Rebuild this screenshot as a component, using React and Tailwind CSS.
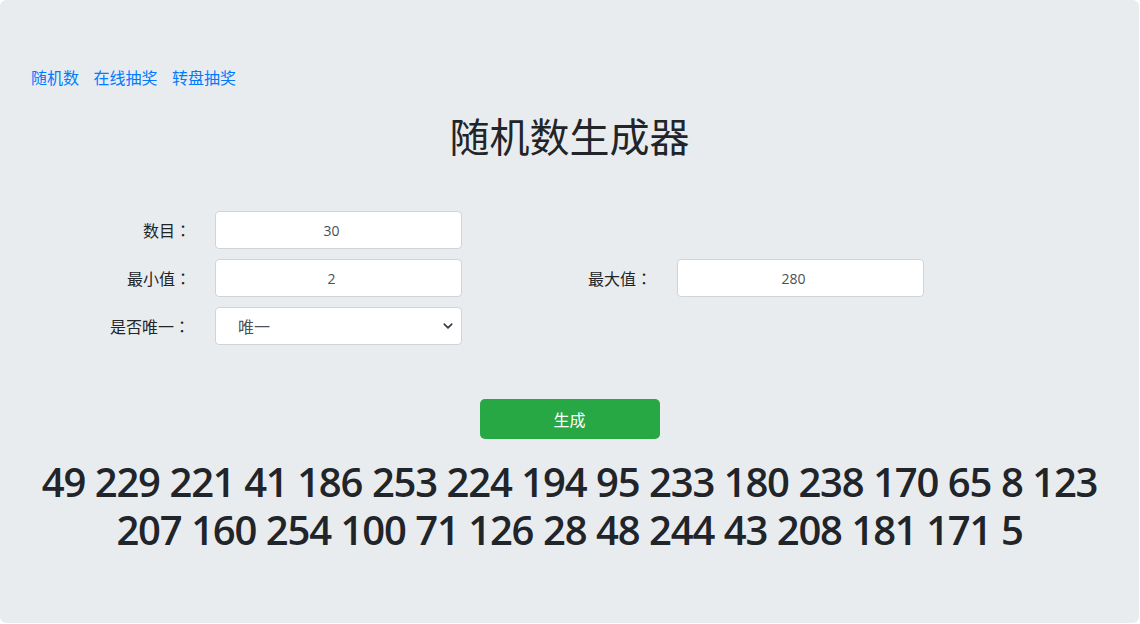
export default function App() {
  const cjk = { fontFamily: '"Segoe UI", "Noto Sans CJK SC", "Noto Sans", sans-serif' };
  const colon = <span style={{ fontFamily: '"Noto Sans CJK TC", sans-serif' }}>：</span>;
  const inputCls = "h-[38px] w-full rounded border border-[#ced4da] bg-white pl-[12px] pr-[26px] text-center text-[14px] text-[#495057] outline-none";
  const inFont = { fontFamily: '"Open Sans", sans-serif' };
  return (
    <div className="w-[1140px] h-[624px] bg-white" style={cjk}>
      <div className="w-[1139px] h-[623px] rounded-md bg-[#e9ecef] px-[30px] pt-[65px] text-[#212529]">
        <div className="flex gap-[14.5px] pl-[1px] text-[16px] leading-[24px] text-[#007bff]">
          <a>随机数</a>
          <a>在线抽奖</a>
          <a>转盘抽奖</a>
        </div>
        <h1 className="mt-[22px] text-center text-[40px] leading-[48px] font-normal">随机数生成器</h1>
        <div className="mt-[52px] -mx-[15px] flex flex-col gap-[10px] text-[16px]">
          <div className="grid grid-cols-[185px_277px_185px_277px] items-center">
            <label className="pr-[9px] text-right">数目{colon}</label>
            <div className="px-[15px]">
              <input readOnly value="30" className={inputCls} style={inFont} />
            </div>
          </div>
          <div className="grid grid-cols-[185px_277px_185px_277px] items-center">
            <label className="pr-[9px] text-right">最小值{colon}</label>
            <div className="px-[15px]">
              <input readOnly value="2" className={inputCls} style={inFont} />
            </div>
            <label className="pr-[10px] text-right">最大值{colon}</label>
            <div className="px-[15px]">
              <input readOnly value="280" className={inputCls} style={inFont} />
            </div>
          </div>
          <div className="grid grid-cols-[185px_277px_185px_277px] items-center">
            <label className="pr-[10px] text-right">是否唯一{colon}</label>
            <div className="px-[15px]">
              <div className="relative h-[38px] w-full rounded border border-[#ced4da] bg-white">
                <span className="absolute left-[22px] top-[7px] text-[16px] leading-[22px] text-[#495057]">唯一</span>
                <svg className="absolute right-[8px] top-[13px]" width="10" height="10" viewBox="0 0 16 16">
                  <path d="M2 5l6 6 6-6" fill="none" stroke="#343a40" strokeWidth="2.6" strokeLinecap="round" strokeLinejoin="round" />
                </svg>
              </div>
            </div>
          </div>
        </div>
        <div className="mt-[54px] flex justify-center">
          <button className="h-[40px] w-[180px] rounded-[5px] bg-[#28a745] text-[16px] text-white">生成</button>
        </div>
        <div className="mt-[19px] text-center text-[40px] leading-[48px] font-semibold tracking-[-0.03em] [word-spacing:0.5px] text-[#212529]" style={{ fontFamily: '"Open Sans", sans-serif' }}>
          49 229 221 41 186 253 224 194 95 233 180 238 170 65 8 123 207 160 254 100 71 126 28 48 244 43 208 181 171 5
        </div>
      </div>
    </div>
  );
}
